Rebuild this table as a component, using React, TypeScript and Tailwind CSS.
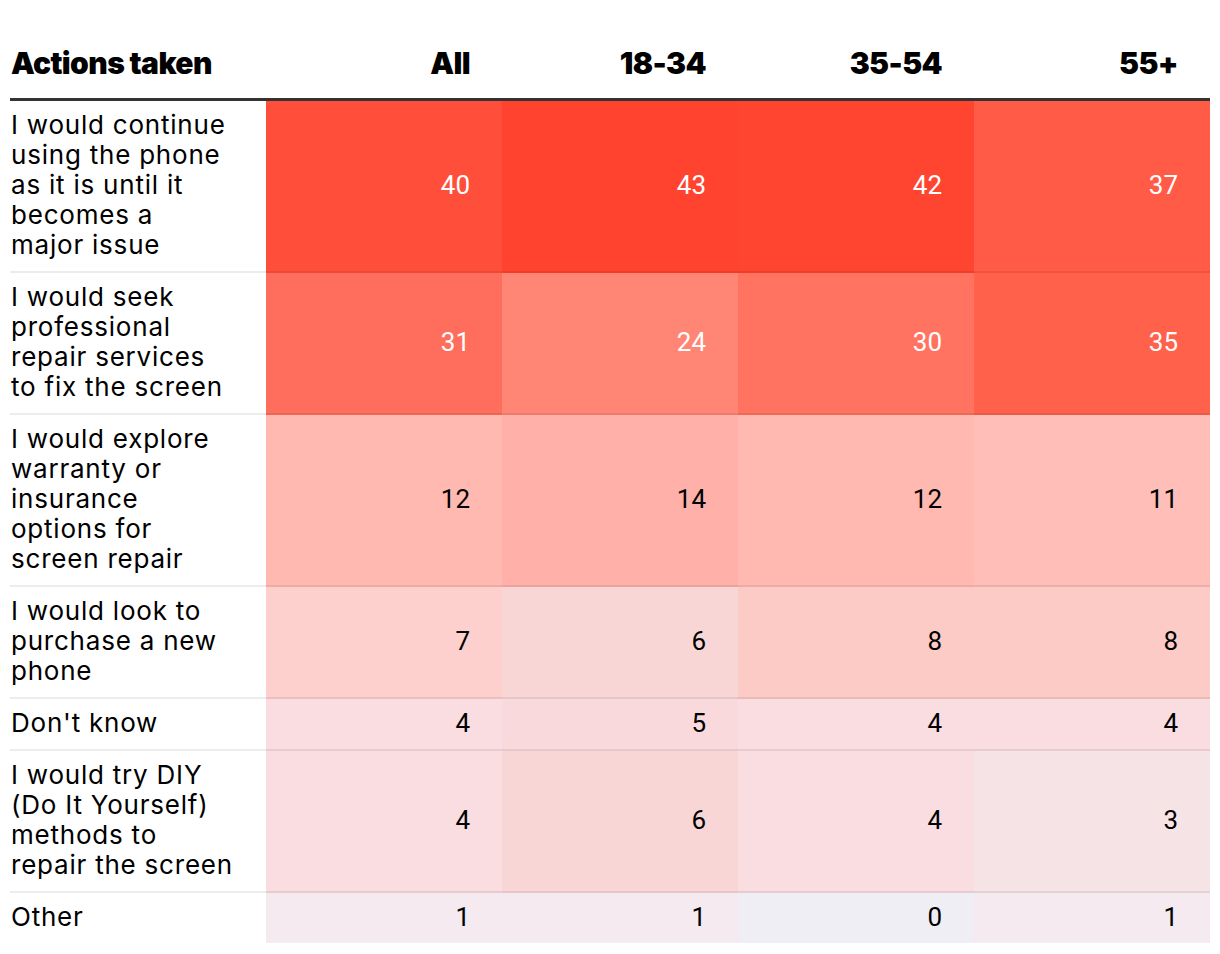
const columns = ['All', '18-34', '35-54', '55+'];

type Row = {
  label: string[];
  values: number[];
  colors: string[];
  light?: boolean;
};

const rows: Row[] = [
  {
    label: ['I would continue', 'using the phone', 'as it is until it', 'becomes a', 'major issue'],
    values: [40, 43, 42, 37],
    colors: ['bg-[#ff4f3b]', 'bg-[#ff432e]', 'bg-[#ff4530]', 'bg-[#ff5b47]'],
    light: true,
  },
  {
    label: ['I would seek', 'professional', 'repair services', 'to fix the screen'],
    values: [31, 24, 30, 35],
    colors: ['bg-[#ff6e5c]', 'bg-[#ff8575]', 'bg-[#ff7360]', 'bg-[#ff614b]'],
    light: true,
  },
  {
    label: ['I would explore', 'warranty or', 'insurance', 'options for', 'screen repair'],
    values: [12, 14, 12, 11],
    colors: ['bg-[#ffb9b1]', 'bg-[#ffb0a8]', 'bg-[#ffb9b1]', 'bg-[#ffbfb8]'],
  },
  {
    label: ['I would look to', 'purchase a new', 'phone'],
    values: [7, 6, 8, 8],
    colors: ['bg-[#fdd0cd]', 'bg-[#f9d6d6]', 'bg-[#fccbc6]', 'bg-[#fccbc6]'],
  },
  {
    label: ["Don't know"],
    values: [4, 5, 4, 4],
    colors: ['bg-[#f9dde0]', 'bg-[#f9d9db]', 'bg-[#f9dde0]', 'bg-[#f9dde0]'],
  },
  {
    label: ['I would try DIY', '(Do It Yourself)', 'methods to', 'repair the screen'],
    values: [4, 6, 4, 3],
    colors: ['bg-[#f9dde0]', 'bg-[#f9d6d6]', 'bg-[#f9dde0]', 'bg-[#f6e3e6]'],
  },
  {
    label: ['Other'],
    values: [1, 1, 0, 1],
    colors: ['bg-[#f4eaf0]', 'bg-[#f4eaf0]', 'bg-[#f0eef5]', 'bg-[#f4eaf0]'],
  },
];

export default function App() {
  return (
    <div className="min-h-[954px] w-[1220px] bg-white px-[10px] text-black">
      <div className="grid grid-cols-[256px_repeat(4,236px)] border-b-[3px] border-[#333333] font-['Inter','Liberation_Sans',sans-serif] text-[30px] font-black leading-[36px] tracking-[-0.02em]">
        <div className="pb-[17px] pl-px pt-[45px]">Actions taken</div>
        {columns.map((c) => (
          <div key={c} className="pb-[17px] pr-[32px] pt-[45px] text-right">
            {c}
          </div>
        ))}
      </div>
      {rows.map((row, i) => {
        const last = i === rows.length - 1;
        const border = last ? '' : 'border-b-2 border-black/[0.075]';
        return (
          <div key={i} className="grid grid-cols-[256px_repeat(4,236px)]">
            <div
              className={`${border} pb-[11px] pl-px pt-[9px] font-['Inter','Liberation_Sans',sans-serif] text-[26px] leading-[30px] tracking-[0.03em]`}
            >
              {row.label.map((l, j) => (
                <div key={j} className="whitespace-nowrap">
                  {l}
                </div>
              ))}
            </div>
            {row.values.map((v, j) => (
              <div
                key={j}
                className={`${border} ${row.colors[j]} ${row.light ? 'text-white' : 'text-black'} flex items-center justify-end pb-[2px] pr-[32px] font-['Roboto','Liberation_Sans',sans-serif] text-[26px]`}
              >
                {v}
              </div>
            ))}
          </div>
        );
      })}
    </div>
  );
}
